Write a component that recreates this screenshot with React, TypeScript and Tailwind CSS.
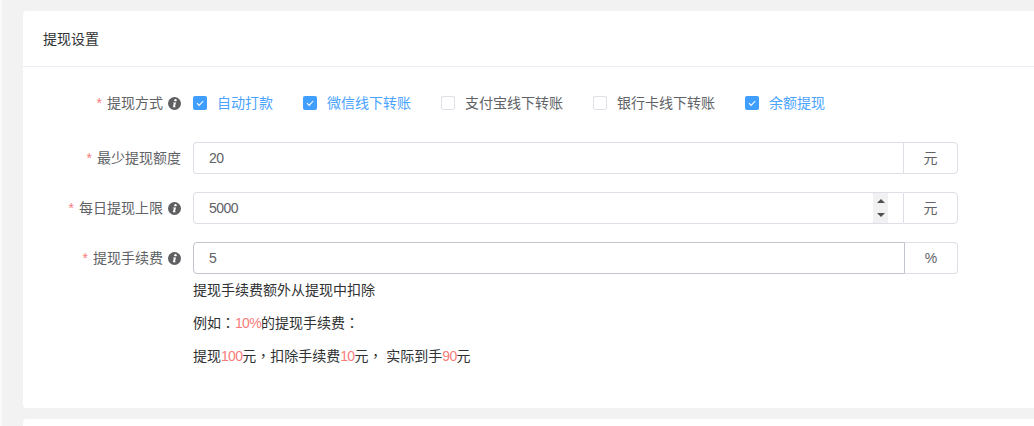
const fontStack = '"Liberation Sans", "Noto Sans CJK SC", sans-serif';

function InfoIcon() {
  return (
    <svg viewBox="0 0 12 12" className="ml-[5px] h-[13px] w-[13px] shrink-0">
      <circle cx="6" cy="6" r="6" fill="#5f5f62" />
      <circle cx="6.9" cy="2.9" r="1.1" fill="#fff" />
      <path d="M4.9 5h2.5L6.4 8.7h.8l-.2.8H4.5l.9-3.7h-.7z" fill="#fff" />
    </svg>
  );
}

function FieldLabel({ text, info }: { text: string; info?: boolean }) {
  return (
    <div className="flex w-[181px] shrink-0 items-center justify-end text-sm text-[#606266]">
      <span className="mr-[5px] text-[#f87c7c]">*</span>
      <span>{text}</span>
      {info ? <InfoIcon /> : null}
    </div>
  );
}

function CheckItem({ label, checked }: { label: string; checked: boolean }) {
  return (
    <div className="flex items-center gap-2.5 text-sm">
      {checked ? (
        <span className="flex h-3.5 w-3.5 items-center justify-center rounded-[2px] bg-[#409eff]">
          <svg viewBox="0 0 14 14" className="h-3.5 w-3.5">
            <path d="M4 7.2l2.2 2.2L10.2 5" fill="none" stroke="#fff" strokeWidth="1.1" />
          </svg>
        </span>
      ) : (
        <span className="h-3.5 w-3.5 rounded-[2px] border border-[#dcdfe6] bg-white" />
      )}
      <span className={checked ? "text-[#4aa3ff]" : "text-[#606266]"}>{label}</span>
    </div>
  );
}

function AmountInput({
  value,
  unit,
  spinner,
  focused,
}: {
  value: string;
  unit: string;
  spinner?: boolean;
  focused?: boolean;
}) {
  return (
    <div className="flex h-8 w-[765px] text-sm text-[#606266]">
      <div
        className={
          focused
            ? "flex flex-1 items-center rounded-l border border-[#c0c4cc] pl-[15px]"
            : "flex flex-1 items-center rounded-l border border-r-0 border-[#dcdfe6] pl-[15px]"
        }
      >
        <span className="flex-1 tracking-[-0.5px]">{value}</span>
        {spinner ? (
          <span className="mr-[15px] flex h-[30px] w-[15px] flex-col items-center justify-center gap-[10px] bg-[#f1f1f1]">
            <span className="h-0 w-0 border-x-[4px] border-b-[4px] border-x-transparent border-b-[#505050]" />
            <span className="h-0 w-0 border-x-[4px] border-t-[4px] border-x-transparent border-t-[#505050]" />
          </span>
        ) : null}
      </div>
      <div
        className={
          focused
            ? "flex w-[53px] items-center justify-center rounded-r border border-l-0 border-[#dcdfe6]"
            : "flex w-[55px] items-center justify-center rounded-r border border-[#dcdfe6]"
        }
      >
        {unit}
      </div>
    </div>
  );
}

function Red({ children }: { children: string }) {
  return <span className="tracking-[-0.7px] text-[#f87c7c]">{children}</span>;
}

// the reference sets full-width punctuation in the middle of the em box
function Punct({ children }: { children: string }) {
  return <span className="font-['Noto_Sans_CJK_TC']">{children}</span>;
}

export default function App() {
  return (
    <div
      className="h-[426px] overflow-hidden border-l-2 border-[#fafafa] bg-[#f2f2f2] pl-[21px] pt-[11px]"
      style={{ fontFamily: fontStack }}
    >
      <section className="h-[397px] rounded-l bg-white">
        <div className="flex h-[56px] items-center border-b border-[#ebeef5] pl-5 text-sm text-[#303133]">
          提现设置
        </div>

        <div className="-ml-[23px] pt-[25px]">
          <div className="flex h-[22px] items-center gap-3">
            <FieldLabel text="提现方式" info />
            <div className="flex gap-[30px]">
              <CheckItem label="自动打款" checked />
              <CheckItem label="微信线下转账" checked />
              <CheckItem label="支付宝线下转账" checked={false} />
              <CheckItem label="银行卡线下转账" checked={false} />
              <CheckItem label="余额提现" checked />
            </div>
          </div>

          <div className="mt-[28px] flex gap-3">
            <FieldLabel text="最少提现额度" />
            <AmountInput value="20" unit="元" />
          </div>

          <div className="mt-[18px] flex gap-3">
            <FieldLabel text="每日提现上限" info />
            <AmountInput value="5000" unit="元" spinner />
          </div>

          <div className="mt-[18px] flex gap-3">
            <FieldLabel text="提现手续费" info />
            <AmountInput value="5" unit="%" focused />
          </div>

          <div className="ml-[193px] text-sm leading-8 text-[#303133]">
            <p>提现手续费额外从提现中扣除</p>
            <p>
              例如<Punct>：</Punct>
              <Red>10%</Red>的提现手续费<Punct>：</Punct>
            </p>
            <p>
              提现<Red>100</Red>元<Punct>，</Punct>扣除手续费<Red>10</Red>元<Punct>，</Punct> 实际到手<Red>90</Red>元
            </p>
          </div>
        </div>
      </section>

      <section className="mt-[11px] h-10 rounded-l bg-white" />
    </div>
  );
}
